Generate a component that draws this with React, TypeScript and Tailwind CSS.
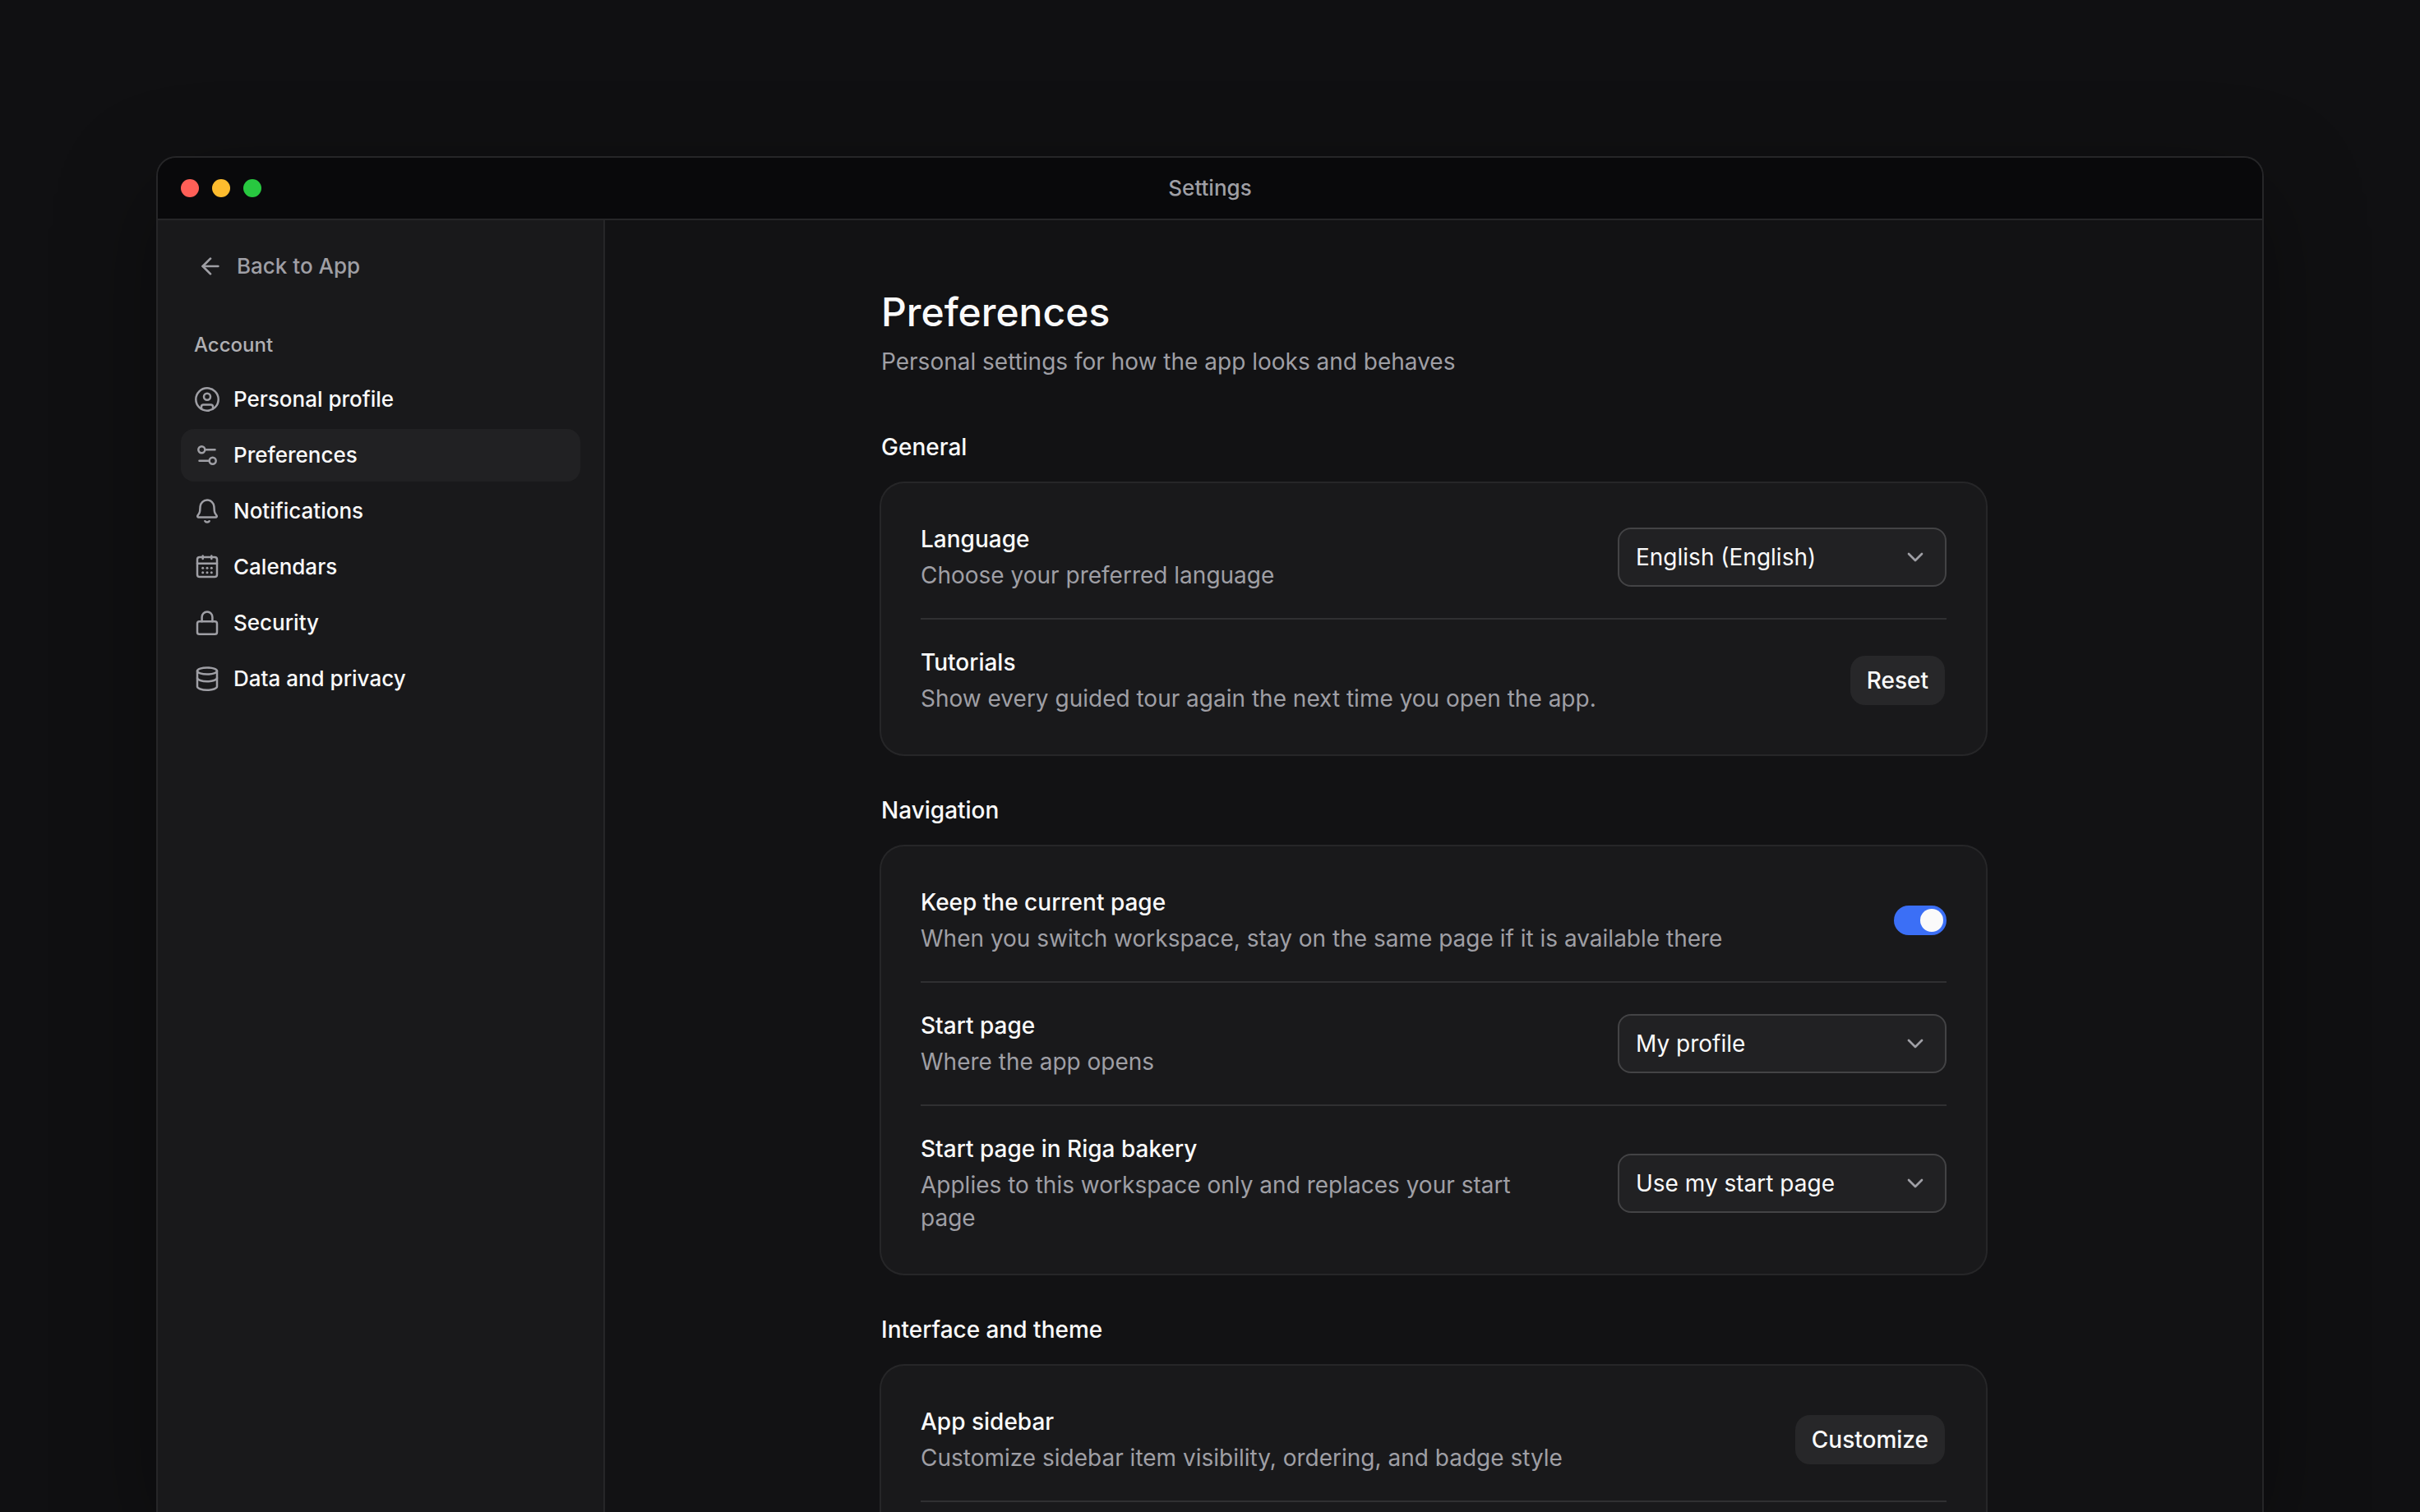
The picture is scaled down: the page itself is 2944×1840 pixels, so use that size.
import { useId, useState } from "react";
import type { ReactNode } from "react";
import { ArrowLeft, ChevronDown } from "lucide-react";

function NavIcon({ children }: { children: ReactNode }) {
  return (
    <svg
      viewBox="0 0 32 32"
      className="size-8 shrink-0 text-[#9f9fa5]"
      fill="none"
      stroke="currentColor"
      strokeWidth="2.5"
      strokeLinecap="round"
      strokeLinejoin="round"
      aria-hidden="true"
    >
      {children}
    </svg>
  );
}

const navItems = [
  {
    label: "Personal profile",
    icon: (
      <NavIcon>
        <circle cx="16" cy="16" r="13.7" />
        <circle cx="16" cy="12.8" r="4" />
        <path d="M9 27.3V25a2.5 2.5 0 0 1 2.5-2.5h9A2.5 2.5 0 0 1 23 25v2.3" />
      </NavIcon>
    ),
  },
  {
    label: "Preferences",
    active: true,
    icon: (
      <NavIcon>
        <circle cx="9.3" cy="9.2" r="4" />
        <path d="M13.5 9.2h12M6.5 22.7h12" />
        <circle cx="22.7" cy="22.7" r="4" />
      </NavIcon>
    ),
  },
  {
    label: "Notifications",
    icon: (
      <NavIcon>
        <path d="M16 2.6c-4.6 0-8 3.4-8.4 7.8l-.4 5.2c-.1 1.3-.5 2.4-1.2 3.5l-1.5 2.3c-.6 1 0 2.1 1.1 2.1h20.8c1.1 0 1.7-1.1 1.1-2.1L26 19.1c-.7-1.1-1.1-2.2-1.2-3.5l-.4-5.2C24 6 20.6 2.6 16 2.6Z" />
        <path d="M13.4 28.2c.9 1.6 4.3 1.6 5.2 0" />
      </NavIcon>
    ),
  },
  {
    label: "Calendars",
    icon: (
      <NavIcon>
        <rect x="4" y="4" width="24" height="24" rx="2.8" />
        <path d="M4 11.7h24M10.7 2.4v3.6M21.3 2.4v3.6" />
        <g fill="currentColor" stroke="none">
          <circle cx="10.7" cy="17.3" r="1.5" />
          <circle cx="16" cy="17.3" r="1.5" />
          <circle cx="21.3" cy="17.3" r="1.5" />
          <circle cx="10.7" cy="22.7" r="1.5" />
          <circle cx="16" cy="22.7" r="1.5" />
          <circle cx="21.3" cy="22.7" r="1.5" />
        </g>
      </NavIcon>
    ),
  },
  {
    label: "Security",
    icon: (
      <NavIcon>
        <rect x="4" y="14.3" width="24" height="15.5" rx="2.6" />
        <path d="M9.6 14.3V9a6.4 6.4 0 0 1 12.8 0v5.3" />
      </NavIcon>
    ),
  },
  {
    label: "Data and privacy",
    icon: (
      <NavIcon>
        <ellipse cx="16" cy="6.5" rx="12" ry="4.1" />
        <path d="M4 6.5v19c0 2.3 5.4 4.2 12 4.2s12-1.9 12-4.2v-19" />
        <path d="M4 15c0 2.3 5.4 4.2 12 4.2s12-1.9 12-4.2" />
      </NavIcon>
    ),
  },
];

function Sidebar() {
  return (
    <aside className="w-[544px] shrink-0 border-r-2 border-[#262628] bg-[#19191b] px-7 pt-6">
      <a
        href="#app"
        className="flex h-16 items-center gap-4 pl-5 text-[26px] leading-8 font-medium text-[#9f9fa5]"
      >
        <ArrowLeft className="size-8" />
        Back to App
      </a>
      <nav aria-labelledby="account-heading" className="mt-12">
        <h2
          id="account-heading"
          className="pl-4 text-2xl font-medium text-[#b0b0b4]"
        >
          Account
        </h2>
        <ul className="mt-[18px] flex flex-col gap-1">
          {navItems.map((item) => (
            <li key={item.label}>
              <a
                href="#settings"
                aria-current={item.active ? "page" : undefined}
                className={
                  item.active
                    ? "flex h-16 items-center gap-4 rounded-2xl bg-[#212123] px-4 text-[26px] leading-8 font-medium text-[#fafafa]"
                    : "flex h-16 items-center gap-4 rounded-2xl px-4 text-[26px] leading-8 font-medium text-[#fafafa]"
                }
              >
                {item.icon}
                {item.label}
              </a>
            </li>
          ))}
        </ul>
      </nav>
    </aside>
  );
}

function Section({ title, children }: { title: string; children: ReactNode }) {
  return (
    <section className="flex flex-col gap-6 last:flex-1">
      <h2 className="text-[28px] leading-10 font-medium text-[#fafafa]">
        {title}
      </h2>
      <div className="flex-1 divide-y-2 divide-[#303032] rounded-[28px] bg-[#19191b] px-12 py-4 ring-2 ring-[#262628]">
        {children}
      </div>
    </section>
  );
}

function Row({
  title,
  description,
  htmlFor,
  children,
}: {
  title: string;
  description: string;
  htmlFor?: string;
  children: ReactNode;
}) {
  return (
    <div className="flex items-center justify-between gap-16 py-8">
      <div className="flex flex-col gap-1 text-[28px] leading-10">
        {htmlFor ? (
          <label htmlFor={htmlFor} className="font-medium text-[#fafafa]">
            {title}
          </label>
        ) : (
          <h3 className="font-medium text-[#fafafa]">{title}</h3>
        )}
        <p className="text-[#9f9fa5]">{description}</p>
      </div>
      {children}
    </div>
  );
}

function SelectRow({
  title,
  description,
  value,
}: {
  title: string;
  description: string;
  value: string;
}) {
  const id = useId();
  return (
    <Row title={title} description={description} htmlFor={id}>
      <div className="-my-4 grid w-[400px] shrink-0 items-center">
        <select
          id={id}
          className="col-start-1 row-start-1 h-[72px] appearance-none rounded-2xl border-2 border-[#434345] bg-[#212123] pr-14 pl-5 text-[28px] text-[#fafafa]"
        >
          <option>{value}</option>
        </select>
        <ChevronDown className="pointer-events-none col-start-1 row-start-1 mr-[22px] size-8 justify-self-end text-[#9f9fa5]" />
      </div>
    </Row>
  );
}

function SwitchRow({
  title,
  description,
}: {
  title: string;
  description: string;
}) {
  const id = useId();
  const [checked, setChecked] = useState(true);
  return (
    <Row title={title} description={description} htmlFor={id}>
      <input
        id={id}
        type="checkbox"
        role="switch"
        checked={checked}
        onChange={(e) => setChecked(e.target.checked)}
        className="flex h-9 w-16 shrink-0 appearance-none items-center rounded-full bg-[#434345] p-1 before:size-7 before:rounded-full before:bg-[#fafafa] checked:justify-end checked:bg-[#3b6ff6]"
      />
    </Row>
  );
}

function Button({ children }: { children: ReactNode }) {
  return (
    <button
      type="button"
      className="h-16 shrink-0 rounded-[20px] border-2 border-transparent bg-[#272729] bg-clip-padding px-5 text-[28px] font-medium text-[#fafafa]"
    >
      {children}
    </button>
  );
}

export default function App() {
  return (
    <div className="flex h-screen flex-col overflow-hidden bg-[#101012] px-[190px] pt-[190px] font-['Inter',sans-serif]">
      <div className="flex min-h-0 flex-1 flex-col overflow-hidden rounded-t-3xl border-2 border-b-0 border-[#262628] bg-[#121214] shadow-[0_40px_120px_rgba(0,0,0,0.35)]">
        <header className="grid grid-cols-[1fr_auto_1fr] items-center border-b-2 border-[#262628] bg-[#09090b] px-7">
          <div className="flex gap-4">
            <span className="size-[22px] rounded-full bg-[#ff5f57]" />
            <span className="size-[22px] rounded-full bg-[#febc2e]" />
            <span className="size-[22px] rounded-full bg-[#28c840]" />
          </div>
          <div className="text-[26px] leading-[74px] font-medium text-[#9f9fa5]">
            Settings
          </div>
        </header>
        <div className="flex min-h-0 flex-1">
          <Sidebar />
          <main className="flex min-w-0 flex-1 flex-col overflow-hidden pt-20">
            <div className="mx-auto flex w-full max-w-[1344px] flex-1 flex-col gap-12">
              <div className="mb-4 flex flex-col gap-2">
                <h1 className="text-5xl leading-16 font-medium text-[#fafafa]">
                  Preferences
                </h1>
                <p className="text-[28px] leading-10 text-[#9f9fa5]">
                  Personal settings for how the app looks and behaves
                </p>
              </div>
              <Section title="General">
                <SelectRow
                  title="Language"
                  description="Choose your preferred language"
                  value="English (English)"
                />
                <Row
                  title="Tutorials"
                  description="Show every guided tour again the next time you open the app."
                >
                  <Button>Reset</Button>
                </Row>
              </Section>
              <Section title="Navigation">
                <SwitchRow
                  title="Keep the current page"
                  description="When you switch workspace, stay on the same page if it is available there"
                />
                <SelectRow
                  title="Start page"
                  description="Where the app opens"
                  value="My profile"
                />
                <SelectRow
                  title="Start page in Riga bakery"
                  description="Applies to this workspace only and replaces your start page"
                  value="Use my start page"
                />
              </Section>
              <Section title="Interface and theme">
                <Row
                  title="App sidebar"
                  description="Customize sidebar item visibility, ordering, and badge style"
                >
                  <Button>Customize</Button>
                </Row>
                <div className="h-40" />
              </Section>
            </div>
          </main>
        </div>
      </div>
    </div>
  );
}
